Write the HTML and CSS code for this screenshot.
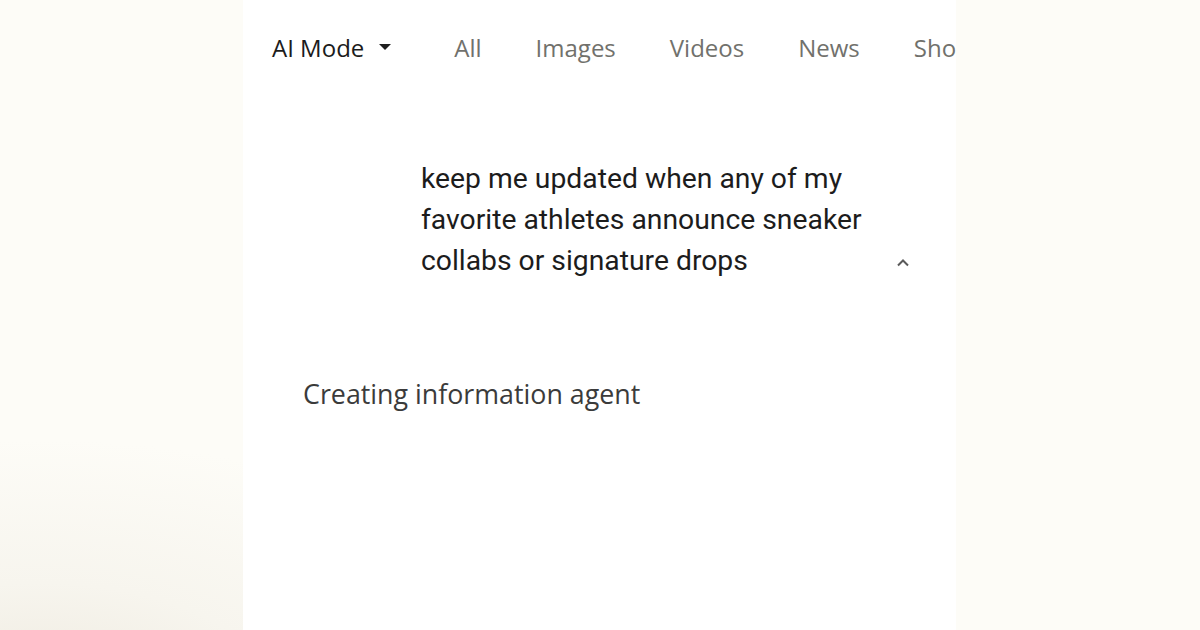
FILE: index.html
```html
<!DOCTYPE html>
<html lang="en">
<head>
    <meta charset="UTF-8">
    <meta name="viewport" content="width=device-width, initial-scale=1.0">
    <title>AI Mode</title>
    <link rel="stylesheet" href="styles.css">
</head>
<body>
    <div id="page">
        <div id="tabs">
            <div class="tab tab-active">
                AI Mode
                <svg class="caret" width="12" height="6" viewBox="0 0 12 6"><path d="M0 0h12L6 6z" fill="#1f1f1f"/></svg>
            </div>
            <div class="tab">All</div>
            <div class="tab">Images</div>
            <div class="tab">Videos</div>
            <div class="tab">News</div>
            <div class="tab">Shopping</div>
        </div>

        <div id="query">
            <div class="query-text">keep me updated when any of my favorite athletes announce sneaker collabs or signature drops</div>
            <svg class="collapse" width="14" height="9" viewBox="0 0 14 9"><path d="M2 7.5l5-5 5 5" fill="none" stroke="#5a5a5a" stroke-width="2"/></svg>
        </div>

        <div id="status">Creating information agent</div>
    </div>
</body>
</html>
```

FILE: styles.css
```css
body {
    margin: 0;
    height: 630px;
    overflow: hidden;
    background: radial-gradient(ellipse 520px 260px at 40px 700px, #eeeadf 0%, #f7f5ee 45%, rgba(253, 252, 247, 0) 100%), #fdfcf7;
    font-family: Roboto, "Liberation Sans", sans-serif;
}

#page {
    margin-left: 243px;
    width: 713px;
    height: 630px;
    background-color: #ffffff;
    overflow: hidden;
}

#tabs {
    display: flex;
    align-items: center;
    gap: 54px;
    padding: 32px 0 0 29px;
    height: 30px;
    white-space: nowrap;
    font-family: "Open Sans", Roboto, sans-serif;
    font-size: 24px;
}

.tab {
    color: #71716c;
    display: flex;
    align-items: center;
    flex-shrink: 0;
}

.tab-active {
    color: #1b1b1b;
    gap: 15px;
    margin-right: 9px;
}

#query {
    display: flex;
    align-items: flex-end;
    margin: 96px 0 0 178px;
    width: 500px;
    font-size: 28.3px;
    line-height: 41px;
    color: #1c1c1c;
}

.query-text {
    width: 465px;
}

.collapse {
    margin: 0 0 14px 10px;
}

#status {
    margin: 94px 0 0 60px;
    font-family: "Open Sans", Roboto, sans-serif;
    font-size: 26.8px;
    color: #3b3b3b;
}
```
